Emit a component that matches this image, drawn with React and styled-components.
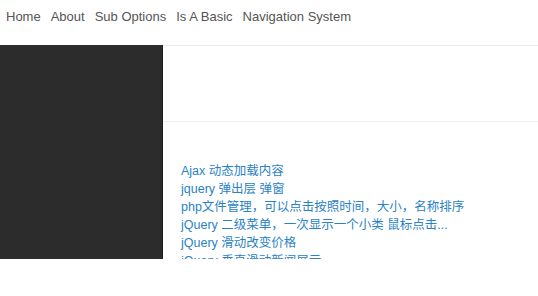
import React from "react";
import styled, { createGlobalStyle } from "styled-components";

const Global = createGlobalStyle`
  html, body { margin: 0; padding: 0; background: #fff; }
  body { font-family: "Liberation Sans", Arial, "Noto Sans CJK SC", sans-serif; }
`;

const Header = styled.nav`
  height: 45px;
  display: flex;
  align-items: flex-start;
  padding: 8px 0 0 6px;
  box-sizing: border-box;
`;

const NavItem = styled.a`
  font-size: 13px;
  line-height: 18px;
  color: #555;
  text-decoration: none;
  margin-right: 10px;
`;

const Main = styled.div`
  display: flex;
  height: 214px;
  overflow: hidden;
`;

const Sidebar = styled.aside`
  width: 162px;
  flex: none;
  background: #2c2c2c;
  border-right: 1px solid #1c1c1c;
`;

const Content = styled.section`
  flex: 1;
  border-top: 1px solid #ececec;
`;

const Banner = styled.div`
  height: 75px;
  border-bottom: 1px solid #efefef;
`;

const List = styled.ul`
  list-style: none;
  margin: 0;
  padding: 40px 0 0 18px;
`;

const Item = styled.li`
  font-family: "Liberation Sans", Arial, "Noto Sans CJK SC", sans-serif;
  font-size: 12.5px;
  line-height: 18px;
  color: #2a82c4;
  white-space: nowrap;
`;

const links = [
  "Ajax 动态加载内容",
  "jquery 弹出层 弹窗",
  "php文件管理，可以点击按照时间，大小，名称排序",
  "jQuery 二级菜单，一次显示一个小类 鼠标点击...",
  "jQuery 滑动改变价格",
  "jQuery 垂直滑动新闻展示",
];

export default function App() {
  return (
    <>
      <Global />
      <Header>
        {["Home", "About", "Sub Options", "Is A Basic", "Navigation System"].map((t) => (
          <NavItem key={t} href="#">{t}</NavItem>
        ))}
      </Header>
      <Main>
        <Sidebar />
        <Content>
          <Banner />
          <List>
            {links.map((l) => (
              <Item key={l}>{l}</Item>
            ))}
          </List>
        </Content>
      </Main>
    </>
  );
}
